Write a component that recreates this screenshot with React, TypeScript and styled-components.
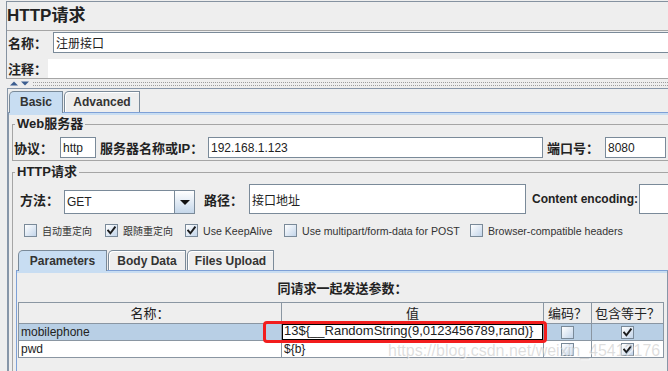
import React from "react";
import styled, { createGlobalStyle } from "styled-components";

const GlobalStyle = createGlobalStyle`
  html, body {
    margin: 0;
    padding: 0;
    background: #eeeeee;
  }
  body {
    font-family: "Liberation Sans", "Noto Sans CJK SC", sans-serif;
    color: #222;
  }
  * {
    box-sizing: border-box;
  }
`;

const Page = styled.div`
  position: relative;
  width: 668px;
  height: 371px;
  overflow: hidden;
  background: #eeeeee;
  padding-top: 1px;
`;

const TopPanel = styled.div`
  margin-left: 6px;
  width: 700px;
  border-top: 1px solid #8592a0;
  border-left: 1px solid #8592a0;
  border-bottom: 1px solid #a5a5a5;
`;

const Title = styled.div`
  height: 28px;
  padding-top: 2px;
  line-height: 24px;
  font-size: 17px;
  font-weight: bold;
  color: #222;
`;

const NameBlock = styled.div`
  border-top: 1px solid #a5a5a5;
  padding-top: 1px;
`;

const FieldRow = styled.div<{ $h: number; $top?: number; $pl?: number }>`
  display: flex;
  align-items: center;
  height: ${p => p.$h}px;
  margin-top: ${p => p.$top ?? 0}px;
  padding-left: ${p => p.$pl ?? 0}px;
`;

const FieldLabel = styled.div<{ $w: number; $pl?: number; $ml?: number; $fs?: number }>`
  flex-shrink: 0;
  width: ${p => p.$w}px;
  margin-left: ${p => p.$ml ?? 0}px;
  padding-left: ${p => p.$pl ?? 0}px;
  font-size: ${p => p.$fs ?? 13}px;
  font-weight: bold;
  color: #222;
  white-space: nowrap;
`;

const TextBox = styled.div<{ $w?: number; $h: number }>`
  flex: ${p => (p.$w ? "0 0 auto" : "1 1 auto")};
  width: ${p => (p.$w ? `${p.$w}px` : "auto")};
  height: ${p => p.$h}px;
  display: flex;
  align-items: center;
  padding-left: 2px;
  border: 1px solid #7a8a99;
  background: #ffffff;
  font-size: 12px;
  color: #222;
  white-space: nowrap;
  overflow: hidden;
`;

const CommentArea = styled.div`
  flex: 1;
  height: 100%;
  background: #ffffff;
`;

const Splitter = styled.div`
  display: flex;
  align-items: center;
  gap: 3px;
  height: 9px;
  padding-left: 10px;
`;

const Dots = styled.div`
  flex: 1;
  height: 4px;
  margin-left: 1px;
  border-top: 1px dotted #9e9e9e;
  border-bottom: 1px dotted #9e9e9e;
`;

const TabPane = styled.div<{ $top?: number; $left: number; $w: number; $framed?: boolean }>`
  margin-top: ${p => p.$top ?? 0}px;
  margin-left: ${p => p.$left}px;
  width: ${p => p.$w}px;
  padding-top: ${p => (p.$framed ? 2 : 0)}px;
  border-top: ${p => (p.$framed ? "1px solid #8796a8" : "none")};
  border-left: ${p => (p.$framed ? "1px solid #8796a8" : "none")};
`;

const TabStrip = styled.div<{ $left: number }>`
  display: flex;
  align-items: flex-end;
  gap: 1px;
  margin-left: ${p => p.$left}px;
`;

const Tab = styled.div<{ $w: number; $h: number; $active?: boolean }>`
  position: relative;
  z-index: ${p => (p.$active ? 1 : 0)};
  width: ${p => p.$w}px;
  height: ${p => (p.$active ? p.$h + 1 : p.$h)}px;
  margin-bottom: ${p => (p.$active ? -1 : 0)}px;
  display: flex;
  align-items: center;
  justify-content: center;
  padding-bottom: ${p => (p.$active ? 1 : 0)}px;
  border: 1px solid #7a8a99;
  border-bottom: none;
  border-top-left-radius: 5px;
  background: ${p => (p.$active ? "#c8ddf2" : "#eeeeee")};
  box-shadow: ${p => (p.$active ? "none" : "inset 1px 1px 0 #ffffff")};
  font-size: 12px;
  font-weight: bold;
  color: #333;
  white-space: nowrap;
`;

const BasicPanel = styled.div`
  height: 300px;
  padding: 4px 0 0 3px;
  border-top: 1px solid #7ea0d6;
  border-left: 1px solid #8796a8;
  box-shadow: inset 0 2px 0 #c8ddf2;
`;

const Group = styled.fieldset<{ $top?: number }>`
  width: 690px;
  min-width: 0;
  margin: ${p => p.$top ?? 0}px 0 0 0;
  padding: 0 0 2px 1px;
  border: 1px solid #a5a5a5;
`;

const Legend = styled.legend`
  margin-left: 1px;
  padding: 0 2px;
  font-size: 13px;
  font-weight: bold;
  line-height: 14px;
  color: #222;
`;

const Combo = styled.div`
  flex-shrink: 0;
  display: flex;
  width: 131px;
  height: 24px;
  margin-top: 6px;
  border: 1px solid #7a8a99;
  background: #ffffff;
`;

const ComboText = styled.div`
  flex: 1;
  display: flex;
  align-items: center;
  padding-left: 2px;
  font-size: 12px;
  color: #222;
`;

const ComboButton = styled.div`
  width: 20px;
  display: flex;
  align-items: center;
  justify-content: center;
  border-left: 1px solid #7a8a99;
  background: linear-gradient(180deg, #ffffff 0%, #c5d7ea 100%);
`;

const CheckRow = styled.div`
  display: flex;
  align-items: center;
  height: 13px;
  margin-top: 10px;
  padding-left: 10px;
`;

const CheckItem = styled.div<{ $w?: number; $fs?: number }>`
  flex-shrink: 0;
  display: flex;
  align-items: center;
  gap: 5px;
  width: ${p => (p.$w ? `${p.$w}px` : "auto")};
  font-size: ${p => p.$fs ?? 10.6}px;
  color: #333;
  white-space: nowrap;
`;

const Box = styled.span`
  flex-shrink: 0;
  width: 13px;
  height: 13px;
  display: flex;
  align-items: center;
  justify-content: center;
  border: 1px solid #7a8a99;
  background: linear-gradient(135deg, #ffffff 0%, #c3d5ea 100%);
`;

const SubPanel = styled.div`
  height: 110px;
  padding: 2px 0 0 1px;
  border-top: 1px solid #7ea0d6;
  border-left: 1px solid #7ea0d6;
  border-right: 1px solid #8796a8;
  box-shadow: inset 0 2px 0 #c8ddf2;
`;

const Caption = styled.div`
  height: 29px;
  display: flex;
  align-items: center;
  justify-content: center;
  font-size: 13px;
  font-weight: bold;
  color: #222;
`;

const Table = styled.div`
  display: grid;
  grid-template-columns: 263px 262px 48px 72px;
  width: 646px;
  border-top: 1px solid #8a96a2;
  border-left: 1px solid #8a96a2;
`;

const Cell = styled.div<{ $h: number; $head?: boolean; $sel?: boolean; $center?: boolean }>`
  height: ${p => p.$h}px;
  display: flex;
  align-items: center;
  justify-content: ${p => (p.$head || p.$center ? "center" : "flex-start")};
  padding-left: ${p => (p.$head || p.$center ? 0 : 2)}px;
  border-right: 1px solid #8a96a2;
  border-bottom: 1px solid #8a96a2;
  background: ${p => (p.$head ? "#eeeeee" : p.$sel ? "#b8cfe5" : "#ffffff")};
  font-size: ${p => (p.$head ? 13 : 12)}px;
  line-height: 15px;
  color: #222;
  white-space: nowrap;
`;

const EditCell = styled.div`
  height: 17px;
  display: flex;
  align-items: flex-start;
  padding: 0 0 0 2px;
  border-right: 1px solid #8a96a2;
  border-bottom: 1px solid #8a96a2;
  background: #ffffff;
  box-shadow: inset 0 0 0 1px #000000;
  font-size: 13px;
  line-height: 14px;
  color: #222;
  white-space: nowrap;
`;

const Highlight = styled.div`
  position: absolute;
  left: 263px;
  top: 321px;
  width: 284px;
  height: 22px;
  border: 3px solid #f21d1d;
  border-radius: 4px;
`;

const Watermark = styled.div`
  position: absolute;
  left: 388px;
  top: 342px;
  font-size: 16px;
  color: rgba(175, 175, 175, 0.42);
  text-shadow: 1px 1px 0 rgba(255, 255, 255, 0.6);
  white-space: nowrap;
  pointer-events: none;
`;

function Triangle({ down }: { down?: boolean }) {
  return (
    <svg width="8" height="5" viewBox="0 0 8 5">
      <polygon points={down ? "0,0.5 8,0.5 4,4.5" : "0,4.5 8,4.5 4,0.5"} fill="#3d5e90" />
    </svg>
  );
}

function Check() {
  return (
    <svg width="9" height="9" viewBox="0 0 9 9">
      <path d="M1.2 4.6 L3.4 7.3 L7.8 1.4" fill="none" stroke="#1c1c1c" strokeWidth="1.9" strokeLinecap="square" />
    </svg>
  );
}

function CheckBox({ checked }: { checked?: boolean }) {
  return <Box>{checked && <Check />}</Box>;
}

export default function App() {
  return (
    <>
      <GlobalStyle />
      <Page>
        <TopPanel>
          <Title>HTTP请求</Title>
          <NameBlock>
            <FieldRow $h={21}>
              <FieldLabel $w={46} $pl={1}>名称：</FieldLabel>
              <TextBox $h={21}>注册接口</TextBox>
            </FieldRow>
            <FieldRow $h={19} $top={6}>
              <FieldLabel $w={41} $pl={1}>注释：</FieldLabel>
              <CommentArea />
            </FieldRow>
          </NameBlock>
        </TopPanel>

        <Splitter>
          <Triangle />
          <Triangle down />
          <Dots />
        </Splitter>

        <TabPane $left={7} $w={700} $framed>
          <TabStrip $left={1}>
            <Tab $w={54} $h={21} $active>Basic</Tab>
            <Tab $w={76} $h={21}>Advanced</Tab>
          </TabStrip>
          <BasicPanel>
            <Group>
              <Legend>Web服务器</Legend>
              <FieldRow $h={21} $top={6}>
                <FieldLabel $w={46}>协议：</FieldLabel>
                <TextBox $w={36} $h={21}>http</TextBox>
                <FieldLabel $w={108} $ml={4}>服务器名称或IP：</FieldLabel>
                <TextBox $w={335} $h={21}>192.168.1.123</TextBox>
                <FieldLabel $w={58} $ml={4}>端口号：</FieldLabel>
                <TextBox $w={61} $h={21}>8080</TextBox>
              </FieldRow>
            </Group>

            <Group $top={4}>
              <Legend>HTTP请求</Legend>
              <FieldRow $h={30} $top={5} $pl={6}>
                <FieldLabel $w={44}>方法：</FieldLabel>
                <Combo>
                  <ComboText>GET</ComboText>
                  <ComboButton>
                    <svg width="10" height="5" viewBox="0 0 10 5">
                      <polygon points="0,0 10,0 5,5" fill="#111" />
                    </svg>
                  </ComboButton>
                </Combo>
                <FieldLabel $w={45} $ml={9}>路径：</FieldLabel>
                <TextBox $w={277} $h={30}>接口地址</TextBox>
                <FieldLabel $w={107} $ml={6} $fs={12}>Content encoding:</FieldLabel>
                <TextBox $w={34} $h={30} />
              </FieldRow>

              <CheckRow>
                <CheckItem $w={81} $fs={10}>
                  <CheckBox />
                  自动重定向
                </CheckItem>
                <CheckItem $w={80} $fs={10}>
                  <CheckBox checked />
                  跟随重定向
                </CheckItem>
                <CheckItem $w={99}>
                  <CheckBox checked />
                  Use KeepAlive
                </CheckItem>
                <CheckItem $w={186}>
                  <CheckBox />
                  Use multipart/form-data for POST
                </CheckItem>
                <CheckItem>
                  <CheckBox />
                  Browser-compatible headers
                </CheckItem>
              </CheckRow>

              <TabPane $top={13} $left={2} $w={652}>
                <TabStrip $left={2}>
                  <Tab $w={89} $h={20} $active>Parameters</Tab>
                  <Tab $w={78} $h={20}>Body Data</Tab>
                  <Tab $w={87} $h={20}>Files Upload</Tab>
                </TabStrip>
                <SubPanel>
                  <Caption>同请求一起发送参数：</Caption>
                  <Table>
                    <Cell $h={21} $head>名称：</Cell>
                    <Cell $h={21} $head>值</Cell>
                    <Cell $h={21} $head>编码？</Cell>
                    <Cell $h={21} $head>包含等于？</Cell>

                    <Cell $h={17} $sel>mobilephone</Cell>
                    <EditCell>13${"{"}__RandomString(9,0123456789,rand){"}"}</EditCell>
                    <Cell $h={17} $sel $center><CheckBox /></Cell>
                    <Cell $h={17} $sel $center><CheckBox checked /></Cell>

                    <Cell $h={17}>pwd</Cell>
                    <Cell $h={17}>${"{b}"}</Cell>
                    <Cell $h={17} $center><CheckBox /></Cell>
                    <Cell $h={17} $center><CheckBox checked /></Cell>
                  </Table>
                </SubPanel>
              </TabPane>
            </Group>
          </BasicPanel>
        </TabPane>

        <Highlight />
        <Watermark>https://blog.csdn.net/weixin_45412176</Watermark>
      </Page>
    </>
  );
}
